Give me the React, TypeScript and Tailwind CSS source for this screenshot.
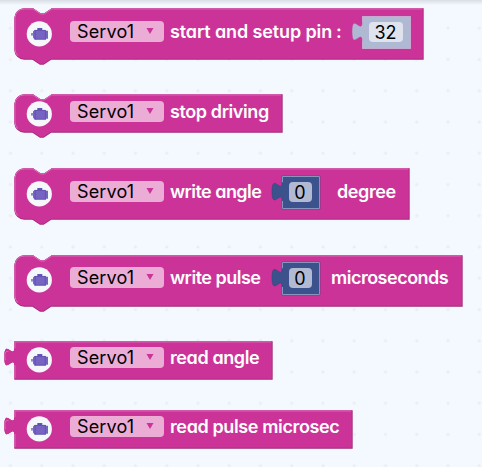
import React from "react";

type BlockProps = {
  kind: "statement" | "value";
  width: number;
  height: number;
  className: string;
  rowClass?: string;
  children: React.ReactNode;
};

const SERVO_FONT = "font-['Inter','Noto_Sans',sans-serif]";

function outline(kind: "statement" | "value", w: number, h: number) {
  return kind === "statement"
    ? `M0 8A8 8 0 0 1 8 0H15l6 4h3l6-4H${w}V${h}H29.5l-6 4h-3l-6-4H8A8 8 0 0 1 0 ${h - 8}Z`
    : `M0 0H${w}V${h}H0V20c0-10-8 8-8-7.5s8 2.5 8-7.5Z`;
}

function highlight(kind: "statement" | "value", w: number, h: number) {
  return kind === "statement"
    ? `M2.6 ${h - 2.6}A8 8 0 0 1 .5 ${h - 8}V8A7.5 7.5 0 0 1 8 .5H15l6 4h3l6-4H${w - 0.5}`
    : `M.5 ${h - 0.5}V19M-7.2 15c-1-5 0-7.5 2.5-6.7M.5 5.5V.5H${w - 0.5}`;
}

function Block({ kind, width, height, className, rowClass = "pt-[13px]", children }: BlockProps) {
  const w = width / 1.25;
  const h = height / 1.25;
  return (
    <div className={`relative shrink-0 ${className}`} style={{ width, height }}>
      <svg className="absolute left-0 top-0 overflow-visible" width={width} height={height}>
        <g transform="translate(.3 .3) scale(1.25)">
          <path d={outline(kind, w - 0.5, h - 0.5)} fill="#a3297a" />
          <path d={outline(kind, w - 1.2, h - 1.2)} fill="#cc3399" />
          <path d={highlight(kind, w - 1.2, h - 1.2)} fill="none" stroke="#db70b8" strokeWidth=".8" />
        </g>
      </svg>
      <div className={`relative flex items-start ${rowClass}`}>{children}</div>
    </div>
  );
}

function Motor() {
  return (
    <svg className="ml-[12px] shrink-0" width="27" height="27" viewBox="0 0 27 27">
      <circle cx="13.3" cy="12.9" r="12.6" fill="#f4f8fa" />
      <path d="M5 12h3v2.6H5Z" fill="#8f8acb" />
      <path d="M11.3 7h5v2.5h-5z" fill="#6355b4" />
      <path d="M8.6 9h11.2v.8H22v8h-2.2v.8H8.6l-1.6-2v-6Z" fill="#7664c2" />
      <path d="M8.6 9.4h11.2M8.6 18.2h11.2M19.3 9.5v8.8M9.2 9.5v8.8" stroke="#5e4cae" strokeWidth=".8" fill="none" />
    </svg>
  );
}

function Dropdown() {
  return (
    <div className="ml-[17px] flex h-[20.5px] w-[94px] shrink-0 items-center rounded-[4px] bg-[#ebadd6]">
      <span className={`ml-[7px] w-[60px] whitespace-nowrap pt-px text-[18px] leading-[20px] tracking-[0.15px] text-black ${SERVO_FONT}`}>
        Servo1
      </span>
      <svg className="ml-[9px]" width="8" height="6" viewBox="0 0 8 6">
        <path d="M.5 0h7L4 6Z" fill="#cc3399" />
      </svg>
    </div>
  );
}

function Label({ className, children }: { className: string; children: string }) {
  return (
    <span
      className={`h-[21px] shrink-0 whitespace-pre pt-px text-[18px] font-semibold leading-[20px] text-white [font-feature-settings:'cv11'] ${SERVO_FONT} ${className}`}
    >
      {children}
    </span>
  );
}

function NumberSocket({ width, value, shadow = false }: { width: number; value: string; shadow?: boolean }) {
  const w = width / 1.25;
  return (
    <div className="relative -mt-[5px] flex h-[33px] shrink-0 justify-center pt-[6px]" style={{ width }}>
      <svg className="absolute left-0 top-0 overflow-visible" width={width} height="33">
        <g transform="scale(1.25)">
          <path
            d={`M0 0H${w}V26.4H0V20c0-10-8 8-8-7.5s8 2.5 8-7.5Z`}
            fill={shadow ? "#b0b9d3" : "#3c528d"}
            stroke={shadow ? "#cc3399" : "#304477"}
            strokeWidth=".4"
          />
          <path
            d={`M.4 5V.4H${w - 0.4}M.4 20V26H${w - 0.4}V.4`}
            fill="none"
            stroke={shadow ? "#c6a9cf" : "#8994bd"}
            strokeWidth=".8"
          />
        </g>
      </svg>
      <span
        className={`relative -left-[1px] flex h-[20px] items-center justify-center rounded-[4px] pt-px text-[18px] leading-[20px] text-black ${SERVO_FONT} ${
          shadow ? "w-[34px] bg-[#dfe3ee]" : "w-[23px] bg-[#b1b9d3]"
        }`}
      >
        {value}
      </span>
    </div>
  );
}

export default function App() {
  return (
    <main className="relative h-[467px] w-[482px] overflow-hidden bg-[#f4f9ff]">
      <svg className="absolute inset-0" width="482" height="467">
        <defs>
          <pattern id="grid" x="8.5" y="26.3" width="31.25" height="31.25" patternUnits="userSpaceOnUse">
            <rect x=".5" y=".5" width="3" height="3" rx="1" fill="#e9eef4" />
          </pattern>
        </defs>
        <rect width="482" height="467" fill="url(#grid)" />
      </svg>
      <div className="absolute inset-x-0 top-0 h-[5px] bg-gradient-to-b from-[#d9dee5] to-[#f4f9ff]" />
      <div className="relative flex flex-col items-start pl-[14px] pt-[8px]">
        <Block kind="statement" width={410} height={52} className="">
          <Motor />
          <Dropdown />
          <Label className="ml-[6px] w-[166px] tracking-[-0.12px]">start and setup pin</Label>
          <Label className="w-[26px] font-extrabold">:</Label>
          <NumberSocket width={49} value="32" shadow />
        </Block>
        <Block kind="statement" width={269} height={39} className="mt-[34px]" rowClass="pt-[7px]">
          <Motor />
          <Dropdown />
          <Label className="ml-[6px] tracking-[-0.4px]">stop driving</Label>
        </Block>
        <Block kind="statement" width={396} height={52} className="mt-[35px]">
          <Motor />
          <Dropdown />
          <Label className="ml-[6px] w-[112px] tracking-[-0.55px]">write angle</Label>
          <NumberSocket width={38} value="0" />
          <Label className="ml-[17px] tracking-[-0.4px]">degree</Label>
        </Block>
        <Block kind="statement" width={449} height={52} className="mt-[35px]" rowClass="pt-[12px]">
          <Motor />
          <Dropdown />
          <Label className="ml-[6px] w-[112px] tracking-[-0.5px]">write pulse</Label>
          <NumberSocket width={38} value="0" />
          <Label className="ml-[11px] tracking-[-0.5px]">microseconds</Label>
        </Block>
        <Block kind="value" width={259} height={39} className="mt-[34px]" rowClass="pt-[6px]">
          <Motor />
          <Dropdown />
          <Label className="ml-[6px] tracking-[-0.4px]">read angle</Label>
        </Block>
        <Block kind="value" width={339} height={39} className="mt-[30px]" rowClass="pt-[6px]">
          <Motor />
          <Dropdown />
          <Label className="ml-[6px] tracking-[-0.38px]">read pulse microsec</Label>
        </Block>
      </div>
    </main>
  );
}
